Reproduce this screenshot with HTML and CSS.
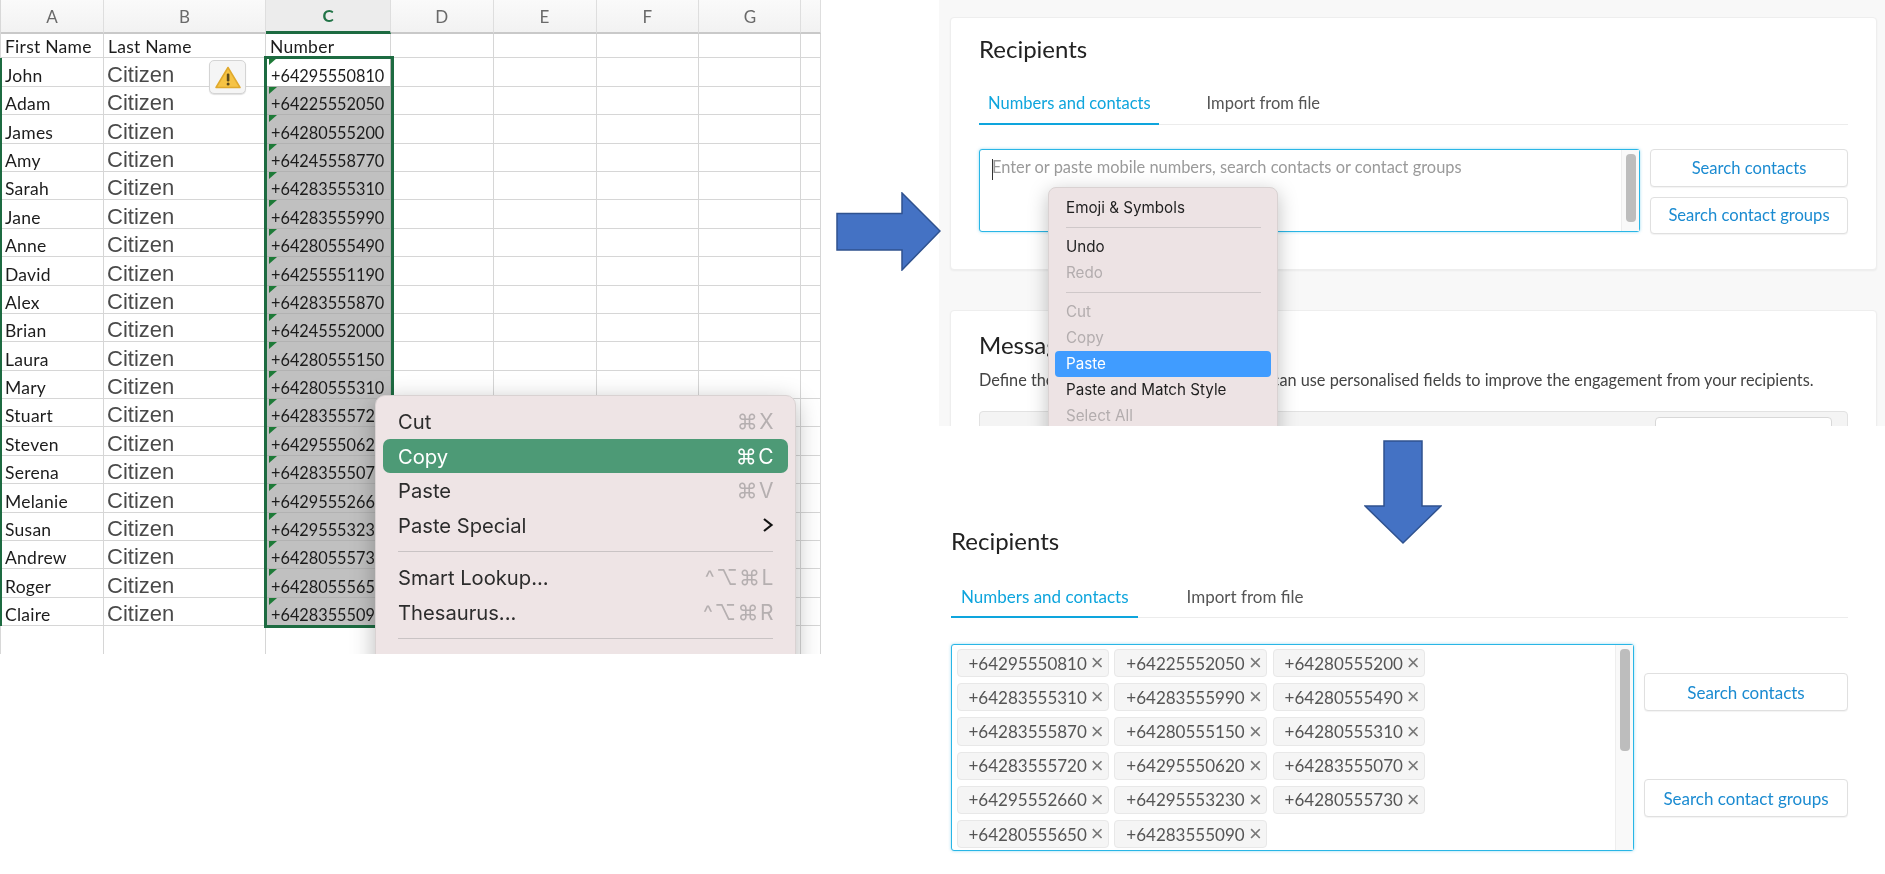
FILE: index.html
```html
<!DOCTYPE html>
<html lang="en">
<head>
<meta charset="utf-8">
<title>Copy numbers from a spreadsheet into Recipients</title>
<link rel="stylesheet" href="styles.css">
</head>
<body>
<main class="canvas">

<section class="sheet-shot">
  <div class="sheet">
    <div class="h">A</div><div class="h">B</div><div class="h h-on">C</div><div class="h">D</div><div class="h">E</div><div class="h">F</div><div class="h">G</div><div class="h"></div>
    <div class="c t">First Name</div><div class="c t">Last Name</div><div class="c t">Number</div><div class="c"></div><div class="c"></div><div class="c"></div><div class="c"></div><div class="c"></div>
    <div class="c n">John</div><div class="c l">Citizen</div><div class="c p first">+64295550810</div><div class="c"></div><div class="c"></div><div class="c"></div><div class="c"></div><div class="c"></div>
    <div class="c n">Adam</div><div class="c l">Citizen</div><div class="c p">+64225552050</div><div class="c"></div><div class="c"></div><div class="c"></div><div class="c"></div><div class="c"></div>
    <div class="c n">James</div><div class="c l">Citizen</div><div class="c p">+64280555200</div><div class="c"></div><div class="c"></div><div class="c"></div><div class="c"></div><div class="c"></div>
    <div class="c n">Amy</div><div class="c l">Citizen</div><div class="c p">+64245558770</div><div class="c"></div><div class="c"></div><div class="c"></div><div class="c"></div><div class="c"></div>
    <div class="c n">Sarah</div><div class="c l">Citizen</div><div class="c p">+64283555310</div><div class="c"></div><div class="c"></div><div class="c"></div><div class="c"></div><div class="c"></div>
    <div class="c n">Jane</div><div class="c l">Citizen</div><div class="c p">+64283555990</div><div class="c"></div><div class="c"></div><div class="c"></div><div class="c"></div><div class="c"></div>
    <div class="c n">Anne</div><div class="c l">Citizen</div><div class="c p">+64280555490</div><div class="c"></div><div class="c"></div><div class="c"></div><div class="c"></div><div class="c"></div>
    <div class="c n">David</div><div class="c l">Citizen</div><div class="c p">+64255551190</div><div class="c"></div><div class="c"></div><div class="c"></div><div class="c"></div><div class="c"></div>
    <div class="c n">Alex</div><div class="c l">Citizen</div><div class="c p">+64283555870</div><div class="c"></div><div class="c"></div><div class="c"></div><div class="c"></div><div class="c"></div>
    <div class="c n">Brian</div><div class="c l">Citizen</div><div class="c p">+64245552000</div><div class="c"></div><div class="c"></div><div class="c"></div><div class="c"></div><div class="c"></div>
    <div class="c n">Laura</div><div class="c l">Citizen</div><div class="c p">+64280555150</div><div class="c"></div><div class="c"></div><div class="c"></div><div class="c"></div><div class="c"></div>
    <div class="c n">Mary</div><div class="c l">Citizen</div><div class="c p">+64280555310</div><div class="c"></div><div class="c"></div><div class="c"></div><div class="c"></div><div class="c"></div>
    <div class="c n">Stuart</div><div class="c l">Citizen</div><div class="c p">+64283555720</div><div class="c"></div><div class="c"></div><div class="c"></div><div class="c"></div><div class="c"></div>
    <div class="c n">Steven</div><div class="c l">Citizen</div><div class="c p">+64295550620</div><div class="c"></div><div class="c"></div><div class="c"></div><div class="c"></div><div class="c"></div>
    <div class="c n">Serena</div><div class="c l">Citizen</div><div class="c p">+64283555070</div><div class="c"></div><div class="c"></div><div class="c"></div><div class="c"></div><div class="c"></div>
    <div class="c n">Melanie</div><div class="c l">Citizen</div><div class="c p">+64295552660</div><div class="c"></div><div class="c"></div><div class="c"></div><div class="c"></div><div class="c"></div>
    <div class="c n">Susan</div><div class="c l">Citizen</div><div class="c p">+64295553230</div><div class="c"></div><div class="c"></div><div class="c"></div><div class="c"></div><div class="c"></div>
    <div class="c n">Andrew</div><div class="c l">Citizen</div><div class="c p">+64280555730</div><div class="c"></div><div class="c"></div><div class="c"></div><div class="c"></div><div class="c"></div>
    <div class="c n">Roger</div><div class="c l">Citizen</div><div class="c p">+64280555650</div><div class="c"></div><div class="c"></div><div class="c"></div><div class="c"></div><div class="c"></div>
    <div class="c n">Claire</div><div class="c l">Citizen</div><div class="c p">+64283555090</div><div class="c"></div><div class="c"></div><div class="c"></div><div class="c"></div><div class="c"></div>
    <div class="c"></div><div class="c"></div><div class="c"></div><div class="c"></div><div class="c"></div><div class="c"></div><div class="c"></div><div class="c"></div>
    <div class="selection"></div>
  </div>
  <div class="warn-btn">
    <svg viewBox="0 0 26 23" width="26" height="23" aria-hidden="true">
      <path d="M13 1.5 L25 21.5 H1 Z" fill="#f6c344" stroke="#e0a92c" stroke-width="1.5" stroke-linejoin="round"/>
      <rect x="11.8" y="7.5" width="2.6" height="8" rx="1.2" fill="#5b4a1c"/>
      <circle cx="13.1" cy="18" r="1.5" fill="#5b4a1c"/>
    </svg>
  </div>
  <div class="xl-menu">
    <div class="xl-item"><span>Cut</span><span class="key">⌘X</span></div>
    <div class="xl-item xl-on"><span>Copy</span><span class="key">⌘C</span></div>
    <div class="xl-item"><span>Paste</span><span class="key">⌘V</span></div>
    <div class="xl-item"><span>Paste Special</span>
      <svg class="chev" viewBox="0 0 12 16" width="12" height="16" aria-hidden="true"><path d="M2 2 L9.5 8 L2 14" fill="none" stroke="#111" stroke-width="2.2"/></svg>
    </div>
    <div class="xl-sep"></div>
    <div class="xl-item"><span>Smart Lookup...</span><span class="key">^⌥⌘L</span></div>
    <div class="xl-item"><span>Thesaurus...</span><span class="key">^⌥⌘R</span></div>
    <div class="xl-sep"></div>
  </div>
</section>

<section class="web-shot">
  <div class="card card-a">
    <h2 class="title">Recipients</h2>
    <div class="tabs">
      <span class="tab tab-on">Numbers and contacts</span>
      <span class="tab tab-off">Import from file</span>
    </div>
    <div class="entry">
      <div class="field field-a">
        <div class="placeholder"><span class="caret"></span>Enter or paste mobile numbers, search contacts or contact groups</div>
        <div class="track"><div class="thumb thumb-a"></div></div>
      </div>
      <div class="actions">
        <button class="btn">Search contacts</button>
        <button class="btn">Search contact groups</button>
      </div>
    </div>
  </div>
  <div class="card card-b">
    <h2 class="title">Message</h2>
    <p class="lead">Define the content of your message. You can use personalised fields to improve the engagement from your recipients.</p>
    <div class="msg-bar"><div class="msg-btn"></div></div>
  </div>
  <div class="web-menu">
    <div class="w-item">Emoji &amp; Symbols</div>
    <div class="w-sep"></div>
    <div class="w-item">Undo</div>
    <div class="w-item w-off">Redo</div>
    <div class="w-sep"></div>
    <div class="w-item w-off">Cut</div>
    <div class="w-item w-off">Copy</div>
    <div class="w-item w-on">Paste</div>
    <div class="w-item">Paste and Match Style</div>
    <div class="w-item w-off">Select All</div>
  </div>
</section>

<section class="result-shot">
  <h2 class="title">Recipients</h2>
  <div class="tabs tabs-b">
    <span class="tab tab-on">Numbers and contacts</span>
    <span class="tab tab-off">Import from file</span>
  </div>
  <div class="entry entry-b">
    <div class="field field-b">
      <div class="chips">
        <span class="chip">+64295550810<i>×</i></span>
        <span class="chip">+64225552050<i>×</i></span>
        <span class="chip">+64280555200<i>×</i></span>
        <span class="chip">+64283555310<i>×</i></span>
        <span class="chip">+64283555990<i>×</i></span>
        <span class="chip">+64280555490<i>×</i></span>
        <span class="chip">+64283555870<i>×</i></span>
        <span class="chip">+64280555150<i>×</i></span>
        <span class="chip">+64280555310<i>×</i></span>
        <span class="chip">+64283555720<i>×</i></span>
        <span class="chip">+64295550620<i>×</i></span>
        <span class="chip">+64283555070<i>×</i></span>
        <span class="chip">+64295552660<i>×</i></span>
        <span class="chip">+64295553230<i>×</i></span>
        <span class="chip">+64280555730<i>×</i></span>
        <span class="chip">+64280555650<i>×</i></span>
        <span class="chip">+64283555090<i>×</i></span>
      </div>
      <div class="track"><div class="thumb thumb-b"></div></div>
    </div>
    <div class="actions actions-b">
      <button class="btn">Search contacts</button>
      <button class="btn">Search contact groups</button>
    </div>
  </div>
</section>

<svg class="arrow arrow-right" viewBox="0 0 105 79" width="105" height="79" aria-hidden="true">
  <path d="M1 21.5 H66 V1 L104 39 L66 78 V58 H1 Z" fill="#4472c4" stroke="#2f528f" stroke-width="1.5"/>
</svg>
<svg class="arrow arrow-down" viewBox="0 0 78 105" width="78" height="105" aria-hidden="true">
  <path d="M20 1 H58 V66 H77 L39 103 L1 66 H20 Z" fill="#4472c4" stroke="#2f528f" stroke-width="1.5"/>
</svg>
</main>
</body>
</html>
```
FILE: styles.css
```css
* { box-sizing: border-box; }
html, body { margin: 0; padding: 0; background: #fff; }
.canvas { position: relative; width: 1885px; height: 874px; overflow: hidden; background: #fff; }

/* spreadsheet screenshot */
.sheet-shot { position: absolute; left: 0; top: 0; width: 821px; height: 654px; overflow: hidden; filter: blur(.35px); }
.sheet {
  display: grid;
  grid-template-columns: 103px 162px 125px 102.5px 103px 102.7px 102.3px 20px;
  grid-template-rows: 34px 24.4px repeat(21, 28.4px);
  position: relative;
  border-left: 1px solid #d8d8d8;
}
.sheet::before {
  content: ""; position: absolute; grid-column: 1 / 2; grid-row: 3 / 23;
  left: -1px; top: 0; bottom: 0; width: 2px; background: #1d6b41; z-index: 1;
}
.h {
  display: flex; align-items: center; justify-content: center;
  font: 17px "Lato", sans-serif; color: #6a6a6a;
  background: linear-gradient(#fafafa, #f2f2f2);
  border-right: 1px solid #dedede;
  border-bottom: 2px solid #c9c9c9;
}
.h-on { color: #217346; font-weight: 700; background: #ececec; border-bottom: 3px solid #1d6b41; }
.c {
  border-right: 1.5px solid #d6d6d6;
  border-bottom: 1.5px solid #d6d6d6;
  display: flex; align-items: flex-end;
  padding: 0 0 0 4px;
  white-space: nowrap; overflow: hidden;
  position: relative;
  color: #1c1c1c;
}
.t { font: 17.5px "Lato", sans-serif; letter-spacing: .25px; }
.n { font: 17.5px "Lato", sans-serif; letter-spacing: .25px; }
.l { font: 22px/22px "Liberation Sans", sans-serif; color: #4a4a4a; padding-left: 3px; }
.p { font: 16.3px "Lato", sans-serif; background: #c0c0c0; border-color: #b2b2b2; padding: 0 0 1px 5px; }
.p::before {
  content: ""; position: absolute; left: 3px; top: 0;
  border-top: 7px solid #1d7a37; border-right: 8px solid transparent;
}
.first { background: #fff; }
.selection {
  position: absolute; grid-column: 3 / 4; grid-row: 3 / 23;
  top: -2px; right: -3px; bottom: -2px; left: -2px;
  border: 3px solid #1d6b41;
  z-index: 1;
}
.warn-btn {
  position: absolute; left: 209px; top: 60px; width: 37px; height: 34px;
  display: flex; align-items: center; justify-content: center;
  background: #f5f5f5; border: 1px solid #d4d4d4; border-radius: 5px;
  box-shadow: 0 1px 1px rgba(0,0,0,.12);
  z-index: 2;
}
.xl-menu {
  position: absolute; left: 375px; top: 395px; width: 421px; height: 290px;
  background: #eee4e5; border: 1px solid #d9d2d2; border-radius: 10px;
  box-shadow: 0 6px 24px rgba(0,0,0,.28);
  padding: 8px 7px 0;
  font: 20.2px "Inter", sans-serif; color: #2c2c2c;
  z-index: 3;
}
.xl-item { display: flex; align-items: center; justify-content: space-between; height: 34.7px; padding: 0 13px 0 15px; border-radius: 7px; }
.xl-on { background: #4d9a76; color: #fff; }
.xl-on .key { color: #fff; }
.key { color: #b5afb0; font-family: "Inter", "DejaVu Sans", sans-serif; font-size: 21px; letter-spacing: 1.5px; }
.chev { margin-right: 1px; }
.xl-sep { height: 1px; background: #c9c3c4; margin: 8px 15px 8.5px; }

/* web screenshot */
.web-shot {
  position: absolute; left: 939px; top: 0; width: 946px; height: 426px; overflow: hidden;
  background: #f8f8f8; padding: 17px 8px 0 11px;
  font-family: "Lato", sans-serif;
  filter: blur(.35px);
}
.card {
  background: #fff; border: 1px solid #eeeeee; border-radius: 4px;
  box-shadow: 0 1px 2px rgba(0,0,0,.05);
  padding: 0 28px;
}
.card-a { height: 253px; padding-top: 16px; margin-bottom: 40px; }
.card-b { height: 200px; padding-top: 19px; }
.title { margin: 0; font: 400 24px/30px "Lato", sans-serif; color: #222; }
.tabs { display: flex; margin-top: 21px; height: 40px; border-bottom: 1.5px solid #ececec; font-size: 16.5px; }
.tab { padding: 8px 8px 0 9px; height: 40px; }
.tab-on { color: #0ea5dd; border-bottom: 2.5px solid #0ea5dd; }
.tab-off { color: #555; margin-left: 39px; }
.entry { display: flex; gap: 10px; margin-top: 24px; align-items: flex-start; }
.field {
  flex: 1; display: flex; justify-content: space-between;
  border: 1.5px solid #29b6e6; border-radius: 3px; background: #fff;
  box-shadow: 0 0 3px rgba(41,182,230,.5);
}
.field-a { height: 83px; }
.placeholder { font-size: 16.4px; color: #9a9a9a; padding: 7px 12px; position: relative; }
.caret { position: absolute; left: 12px; top: 9px; width: 1px; height: 21px; background: #333; }
.track { width: 18px; background: #f9f9f9; border-left: 1px solid #eee; padding: 4px 4px 0; flex: none; }
.thumb { width: 9.5px; background: #bdbdbd; border-radius: 4px; }
.thumb-a { height: 68px; }
.thumb-b { height: 102px; }
.actions { width: 198px; display: flex; flex-direction: column; gap: 10px; }
.btn {
  height: 37.5px; background: #fff; border: 1px solid #e0e0e0; border-radius: 4px;
  color: #1b8bd1; font: 16.6px "Lato", sans-serif;
  box-shadow: 0 1px 1px rgba(0,0,0,.05);
}
.lead { margin: 8px 0 0; font-size: 16.3px; line-height: 24px; color: #444; white-space: nowrap; }
.msg-bar { margin-top: 19px; height: 60px; background: #f4f4f4; border: 1px solid #e2e2e2; border-radius: 4px; padding: 5px 15px 0 0; display: flex; justify-content: flex-end; }
.msg-btn { width: 177px; height: 40px; background: #fff; border: 1px solid #d8d8d8; border-radius: 4px; }
.web-menu {
  position: absolute; left: 109px; top: 187px; width: 230px; height: 300px;
  background: #ede3e4; border: 1px solid #d9d2d2; border-radius: 8px;
  box-shadow: 0 5px 20px rgba(0,0,0,.25);
  padding: 6.5px 6px 0;
  font: 15.2px "Inter", sans-serif; color: #1f1f1f;
}
.w-item { height: 26px; line-height: 26px; padding: 0 10px 0 11px; border-radius: 4px; }
.w-off { color: #b3adae; }
.w-on { background: #409cff; color: #fff; }
.w-sep { height: 1px; background: #cfc8c9; margin: 6px 10px 6px 11px; }

/* result screenshot */
.result-shot {
  position: absolute; left: 931px; top: 426px; width: 954px; height: 448px;
  padding: 100px 37px 0 20px; background: #fff;
  font-family: "Lato", sans-serif;
  filter: blur(.35px);
}
.tabs-b { margin-top: 22px; font-size: 17px; }
.tabs-b .tab { padding-left: 10px; padding-right: 9px; }
.tabs-b .tab-off { margin-left: 39px; }
.entry-b { margin-top: 26px; }
.field-b { height: 207px; }
.chips { display: grid; grid-template-columns: 152px 152.5px 152px; gap: 5.9px 5.8px; padding: 4px 0 0 4.5px; align-content: start; }
.chip {
  display: flex; justify-content: space-between; align-items: center;
  height: 28.3px; padding: 0 4px 0 11px;
  background: #f5f5f5; border: 1px solid #e8e8e8; border-radius: 4px;
  font-size: 17px; color: #555; white-space: nowrap;
}
.chip i { font: 400 22px/1 "Liberation Sans", sans-serif; color: #777; }
.actions-b { width: 204px; gap: 68px; padding-top: 29px; }
.actions-b .btn { height: 38px; font-size: 17px; }

/* slide arrows */
.arrow { position: absolute; }
.arrow-right { left: 836px; top: 192px; }
.arrow-down { left: 1364px; top: 440px; }
```
